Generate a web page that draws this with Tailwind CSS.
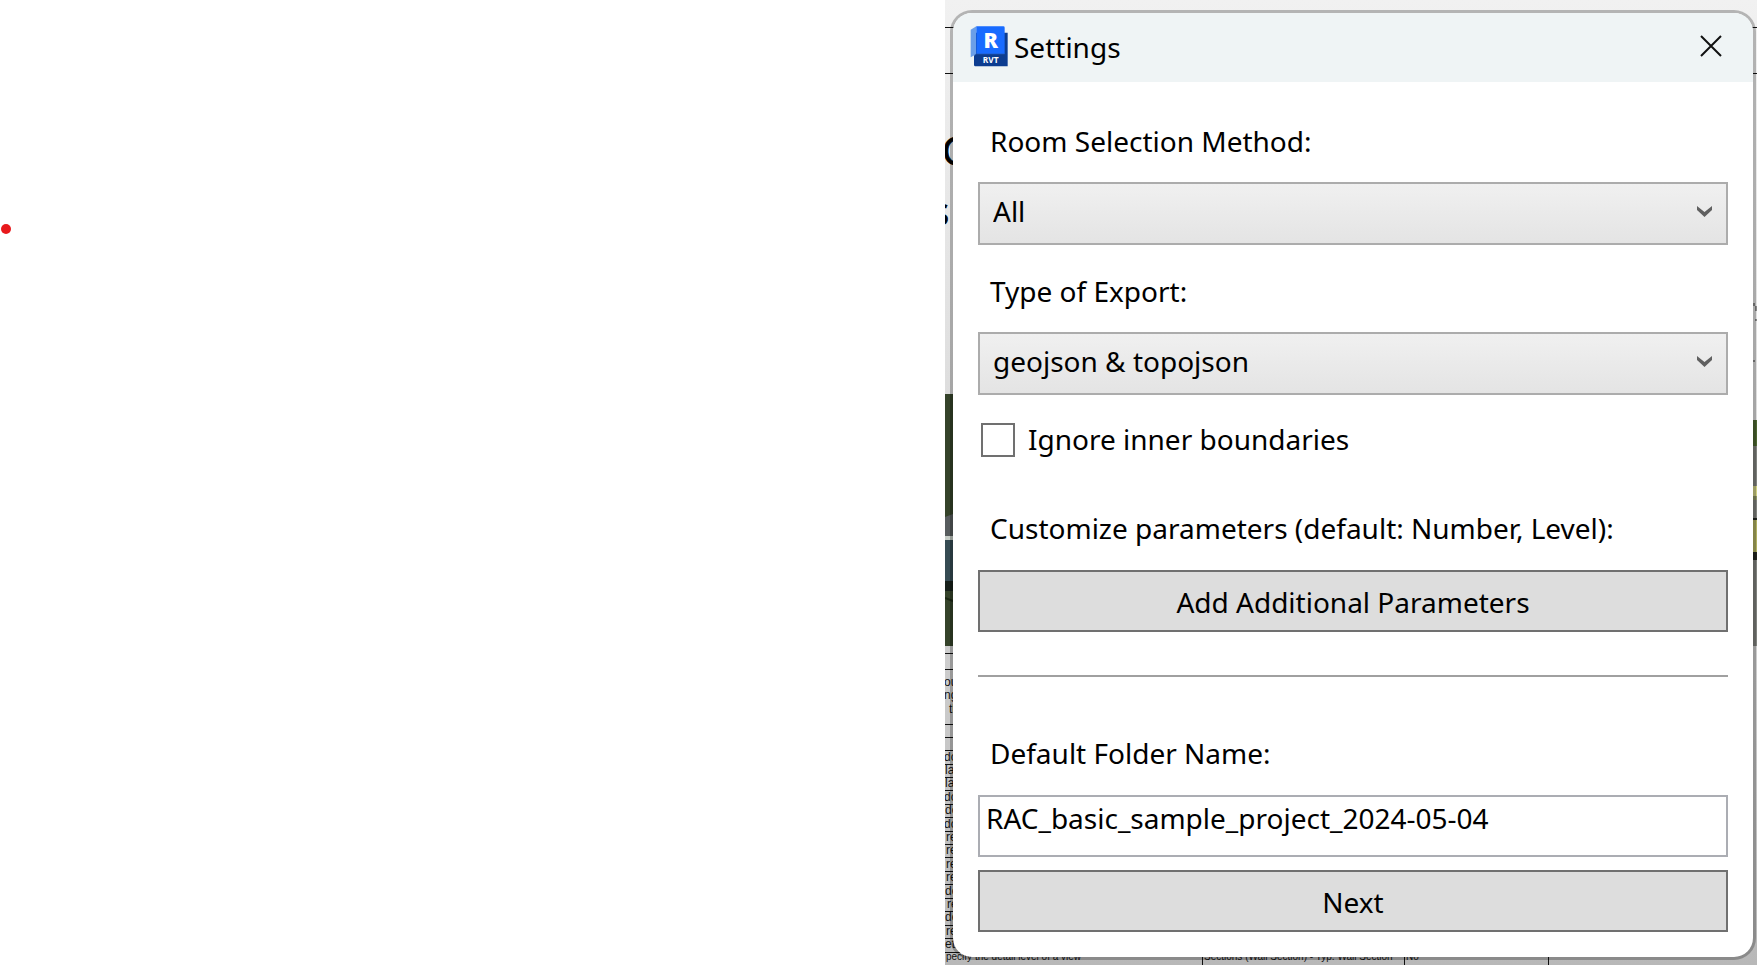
<!DOCTYPE html>
<html lang="en">
<head>
<meta charset="utf-8">
<title>Settings</title>
<script src="https://cdn.jsdelivr.net/npm/@tailwindcss/browser@4"></script>
</head>
<body class="bg-white text-black font-['Noto_Sans',sans-serif] text-[28px] leading-10">
<div class="flex min-h-screen overflow-hidden">
  <div class="w-[945px] shrink-0 pl-px pt-56">
    <div class="size-[10px] rounded-full bg-[#e8191c]"></div>
  </div>
  <main class="relative flex-1 overflow-hidden bg-linear-to-b from-[#f1f1f1] via-[#d9d9d9] to-[#b8b8b8] pt-[10px] pb-[5px] pl-[5px] pr-px">
    <!-- drawing sheet behind the dialog -->
    <svg class="absolute left-0 top-0" width="812" height="965" aria-hidden="true">
      <path d="M0 27.500H812M0 73.500H812M0 653.500H9M0 669.500H9M0 724.500H9M0 737.500H9M0 750.500H9M0 764.500H9M0 777.500H9M0 790.500H9M0 804.500H9M0 817.500H9M0 831.500H9M0 844.500H9M0 857.500H9M0 871.500H9M0 884.500H9M0 898.500H9M0 911.500H9M0 925.500H9M0 938.500H9M0 952.500H30M257.500 950V965M459.500 950V965M603.500 950V965" stroke="#111"/>
      <g font-family="Open Sans, sans-serif" font-size="39" stroke="#000">
        <text x="-3" y="165">C</text><text x="4" y="225" text-anchor="end">s</text>
      </g>
      <g font-family="Liberation Sans, sans-serif" font-size="12" fill="#111">
        <text x="-1" y="686">ou</text><text x="-1" y="699">ng</text><text x="4" y="713">th</text>
        <text x="-1" y="761">do</text><text x="0" y="774">la</text><text x="0" y="787">la</text><text x="-1" y="801">do</text><text x="0" y="814">do</text><text x="-1" y="828">do</text><text x="1" y="841">re</text><text x="1" y="854">re</text><text x="1" y="868">re</text><text x="1" y="881">re</text><text x="0" y="895">do</text><text x="2" y="908">re</text><text x="0" y="921">do</text><text x="1" y="935">re</text><text x="0" y="948">et</text>
      </g>
      <g font-family="Liberation Sans, sans-serif" font-size="10" fill="#111">
        <text x="1" y="960">pecify the detail level of a view</text>
        <text x="259" y="960">Sections (Wall Section) - Typ. Wall Section</text>
        <text x="461" y="960">No</text>
      </g>
      <!-- rendered photo, left edge -->
      <path d="M0 394H8V646H0z" fill="#35432a"/>
      <path d="M0 517L8 514V536H0z" fill="#575c5e"/>
      <path d="M0 536H8V540H0z" fill="#c5ccc6"/>
      <path d="M0 540H8V581H0z" fill="#364b53"/>
      <path d="M0 581H8V591H0z" fill="#17201a"/>
      <path d="M0 598L8 601" stroke="#1c2814" stroke-width="2"/>
      <!-- rendered photo, right edge -->
      <path d="M806 420H812V646H806z" fill="#80827e"/>
      <path d="M806 420H812V446H806z" fill="#4c6630"/>
      <path d="M806 486H812V496H806z" fill="#d0d184"/>
      <path d="M806 496H812V500H806z" fill="#8c9365"/>
      <path d="M806 518H812V520H806zM806 552H812V560H806z" fill="#22251f"/>
      <path d="M806 520H812V552H806z" fill="#b0b061"/>
      <path d="M808 303h2v3h-2zM810 306h2v5h-2zM810 319h2v2h-2zM808 360h2v2h-2z" fill="#888"/>
    </svg>

    <section role="dialog" aria-labelledby="title" class="relative overflow-hidden rounded-[22px] border-[3px] border-black/25 bg-white bg-clip-padding">
      <header class="flex h-[69px] items-center bg-[#eff4f5] pl-[17px] pr-[31px]">
        <svg class="mb-[3px] mr-[6px] shrink-0" width="38" height="41" viewBox="90 77 114 123" aria-hidden="true">
          <path d="M92 88L109 78V162L92 171z" fill="#6b9fe8"/>
          <path d="M108 97H203V198H106Q102 198 102 193V166L108 161z" fill="#0c3c90"/>
          <path d="M109 78H190Q194 78 194 82V161H109z" fill="#186bff"/>
          <path d="M102 166L108 161H194" fill="none" stroke="#2459af" stroke-width="2"/>
          <text x="152" y="143" text-anchor="middle" font-family="Open Sans, sans-serif" font-weight="800" font-size="64" fill="#fff">R</text>
          <text x="152" y="187" text-anchor="middle" font-family="Open Sans, sans-serif" font-weight="700" font-size="25" fill="#fff">RVT</text>
        </svg>
        <h1 id="title" class="flex-1 pb-[2px]">Settings</h1>
        <button type="button" aria-label="Close" class="mb-1">
          <svg width="22" height="22" viewBox="0 0 22 22" fill="none" stroke="#111" stroke-width="2"><path d="M1 1L21 21M21 1L1 21"/></svg>
        </button>
      </header>

      <form class="flex flex-col px-[25px] pb-[25px] pt-[39px]">
        <label for="method" class="px-3">Room Selection Method:</label>
        <div class="relative mt-[21px]">
          <select id="method" class="block h-[63px] w-full appearance-none border-2 border-[#acacac] bg-linear-to-b from-[#f0f0f0] to-[#e4e4e4] px-[13px] pb-[6px]"><option>All</option></select>
          <svg class="pointer-events-none absolute right-4 top-6" width="15" height="11" viewBox="0 0 15 11" aria-hidden="true"><path d="M0 0L7.500 6L15 0V4L7.500 11L0 4z" fill="#606060"/></svg>
        </div>

        <label for="type" class="mt-[26px] px-3">Type of Export:</label>
        <div class="relative mt-[21px]">
          <select id="type" class="block h-[63px] w-full appearance-none border-2 border-[#acacac] bg-linear-to-b from-[#f0f0f0] to-[#e4e4e4] px-[13px] pb-[6px]"><option>geojson &amp; topojson</option></select>
          <svg class="pointer-events-none absolute right-4 top-6" width="15" height="11" viewBox="0 0 15 11" aria-hidden="true"><path d="M0 0L7.500 6L15 0V4L7.500 11L0 4z" fill="#606060"/></svg>
        </div>

        <div class="mt-6 flex items-center gap-[13px] pl-[3px]">
          <input id="inner" type="checkbox" class="size-[34px] appearance-none border-2 border-[#707070] bg-white">
          <label for="inner" class="pb-[2px]">Ignore inner boundaries</label>
        </div>

        <label for="params" class="mt-[47px] px-3">Customize parameters (default: Number, Level):</label>
        <button id="params" type="button" class="mt-[22px] h-[62px] border-2 border-[#707070] bg-[#ddd] pt-[2px]">Add Additional Parameters</button>

        <hr class="mt-[43px] border-t-2 border-[#a0a0a0]">

        <label for="folder" class="mt-[56px] px-3">Default Folder Name:</label>
        <input id="folder" type="text" value="RAC_basic_sample_project_2024-05-04" class="mt-[22px] h-[62px] border-2 border-[#abadb3] bg-white pb-4 pl-[6px]">
        <button type="submit" class="mt-[13px] h-[62px] border-2 border-[#707070] bg-[#ddd] pt-[2px]">Next</button>
      </form>
    </section>
  </main>
</div>
</body>
</html>
